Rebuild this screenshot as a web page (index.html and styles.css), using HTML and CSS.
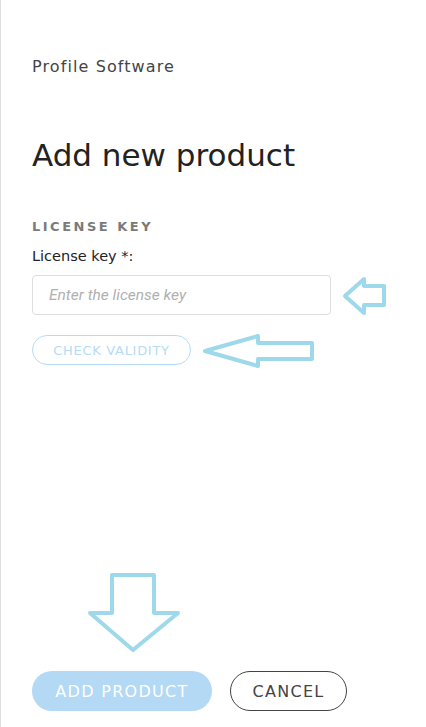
FILE: index.html
```html
<!DOCTYPE html>
<html lang="en">

<head>
    <meta charset="UTF-8" />
    <meta name="viewport" content="width=device-width, initial-scale=1.0" />
    <title>Add new product</title>

    <link rel="stylesheet" href="styles.css">
</head>

<body>
    <div class="panel">
        <div class="company">Profile Software</div>

        <h1>Add new product</h1>

        <form class="licenseForm">
            <div class="sectionTitle">LICENSE KEY</div>
            <label for="licenseKey">License key *:</label>
            <input type="text" id="licenseKey" placeholder="Enter the license key" />
            <button type="button" class="checkBtn">CHECK VALIDITY</button>
        </form>

        <div class="actions">
            <button type="submit" class="addBtn">ADD PRODUCT</button>
            <button type="button" class="cancelBtn">CANCEL</button>
        </div>

        <!-- annotation arrows -->
        <svg class="arrow arrowInput" width="46" height="40" viewBox="0 0 46 40">
            <path d="M3 20 L22 3 L22 10 L42 10 L42 29 L22 29 L22 37 Z" />
        </svg>
        <svg class="arrow arrowCheck" width="114" height="38" viewBox="0 0 114 38">
            <path d="M3 19 L56 4 L56 11 L110 11 L110 27 L56 27 L56 34 Z" />
        </svg>
        <svg class="arrow arrowAdd" width="96" height="82" viewBox="0 0 96 82">
            <path d="M26 3 L68 3 L68 41 L92 41 L47 78 L4 41 L26 41 Z" />
        </svg>
    </div>
</body>

</html>
```

FILE: styles.css
```css
body {
    margin: 0;
    background-color: #fff;
    font-family: "DejaVu Sans", sans-serif;
}

.panel {
    position: relative;
    height: 727px;
    box-sizing: border-box;
    border-left: 1px solid #dcdcdc;
    padding: 56px 0 0 31px;
}

.company {
    font-size: 16px;
    letter-spacing: 1.1px;
    color: #444;
    height: 22px;
    line-height: 22px;
}

h1 {
    margin: 58px 0 0;
    font-size: 31px;
    font-weight: normal;
    color: #222;
    line-height: 38px;
}

.licenseForm {
    margin-top: 45px;
    display: flex;
    flex-direction: column;
    align-items: flex-start;
}

.sectionTitle {
    font-size: 13px;
    font-weight: bold;
    letter-spacing: 2.5px;
    color: #7a7a7a;
    line-height: 16px;
}

label {
    margin-top: 12px;
    font-size: 14.5px;
    color: #222;
    line-height: 18px;
}

input[type="text"] {
    margin-top: 10px;
    width: 299px;
    height: 40px;
    box-sizing: border-box;
    padding: 0 16px;
    border: 1px solid #dedede;
    border-radius: 4px;
    font-family: Roboto, sans-serif;
    font-size: 15.5px;
}

input::placeholder {
    color: #b0b0b0;
    font-style: italic;
}

.checkBtn {
    margin-top: 20px;
    width: 159px;
    height: 30px;
    background: #fff;
    border: 1px solid #b5dbf6;
    border-radius: 15px;
    color: #b5dbf6;
    font-family: "DejaVu Sans", sans-serif;
    font-size: 13px;
    letter-spacing: 0.7px;
    padding: 0;
}

.actions {
    position: absolute;
    left: 31px;
    top: 671px;
    display: flex;
    gap: 18px;
}

.addBtn {
    width: 180px;
    height: 40px;
    background-color: #b3d9f5;
    border: none;
    border-radius: 20px;
    color: #fff;
    font-family: "DejaVu Sans", sans-serif;
    font-size: 16px;
    letter-spacing: 1.3px;
    padding: 0;
}

.cancelBtn {
    width: 117px;
    height: 40px;
    background: #fff;
    border: 1px solid #444;
    border-radius: 20px;
    color: #444;
    font-family: "DejaVu Sans", sans-serif;
    font-size: 16px;
    letter-spacing: 1.3px;
    padding: 0;
}

.arrow {
    position: absolute;
}

.arrow path {
    fill: none;
    stroke: #9dd9ea;
    stroke-width: 4;
    stroke-linejoin: round;
}

.arrowInput {
    left: 341px;
    top: 276px;
}

.arrowCheck {
    left: 201px;
    top: 332px;
}

.arrowAdd {
    left: 85px;
    top: 572px;
}
```
